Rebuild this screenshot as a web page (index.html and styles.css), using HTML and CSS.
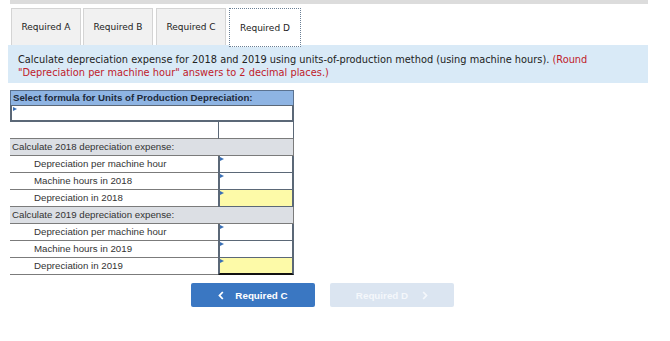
FILE: index.html
```html
<!DOCTYPE html>
<html>
<head>
<meta charset="utf-8">
<link rel="stylesheet" href="styles.css">
</head>
<body>
<div class="page">
  <div class="topbar"></div>
  <div class="tabs">
    <div class="tab">Required A</div>
    <div class="tab">Required B</div>
    <div class="tab">Required C</div>
    <div class="tab active">Required D</div>
  </div>
  <div class="info"><span>Calculate depreciation expense for 2018 and 2019 using units-of-production method (using machine hours).</span> <span class="red">(Round</span><br><span class="red">"Depreciation per machine hour" answers to 2 decimal places.)</span></div>
  <div class="sheet">
    <div class="head">Select formula for Units of Production Depreciation:</div>
    <div class="formula"><span class="mark"></span></div>
    <div class="row blank"><div class="lbl"></div><div class="cell"></div></div>
    <div class="row section"><div class="lbl">Calculate 2018 depreciation expense:</div><div class="cell plain"></div></div>
    <div class="row"><div class="lbl sub">Depreciation per machine hour</div><div class="cell input"><span class="mark"></span></div></div>
    <div class="row"><div class="lbl sub">Machine hours in 2018</div><div class="cell input"><span class="mark"></span></div></div>
    <div class="row"><div class="lbl sub">Depreciation in 2018</div><div class="cell input yellow"><span class="mark"></span></div></div>
    <div class="row section"><div class="lbl">Calculate 2019 depreciation expense:</div><div class="cell plain"></div></div>
    <div class="row"><div class="lbl sub">Depreciation per machine hour</div><div class="cell input"><span class="mark"></span></div></div>
    <div class="row"><div class="lbl sub">Machine hours in 2019</div><div class="cell input"><span class="mark"></span></div></div>
    <div class="row"><div class="lbl sub">Depreciation in 2019</div><div class="cell input yellow last"><span class="mark"></span></div></div>
  </div>
  <div class="nav">
    <div class="btn prev"><svg class="chev" width="6" height="9" viewBox="0 0 6 9"><polyline points="4.8,1 1.5,4.5 4.8,8" fill="none" stroke="#fff" stroke-width="1.8"/></svg>Required C</div>
    <div class="btn next">Required D<svg class="chev" width="6" height="9" viewBox="0 0 6 9"><polyline points="1.2,1 4.5,4.5 1.2,8" fill="none" stroke="#f4f7fb" stroke-width="1.8"/></svg></div>
  </div>
</div>
</body>
</html>
```
FILE: styles.css
```css
html, body { margin: 0; padding: 0; background: #fff; }
.page { width: 670px; height: 341px; position: relative; font-family: "DejaVu Sans", Verdana, sans-serif; }
.topbar { margin-left: 10px; width: 638px; height: 4px; background: #dcdcdc; }
.tabs { display: flex; margin: 4px 0 0 11px; height: 37px; gap: 2px; }
.tab { width: 68px; height: 36px; background: #f1f1f1; border: 1px solid #d4d4d4; border-bottom: none; font-size: 9px; color: #222; display: flex; align-items: center; justify-content: center; }
.tab:nth-child(3) { margin-left: 1px; }
.tab.active { background: #fff; border: 1px dotted #6a7f95; width: 70px; height: 37px; margin-left: 1px; }
.info { margin: 0 22px 0 8px; height: 38px; background: #d9eaf7; font-size: 9.8px; color: #222; padding: 8px 10px 0 10px; box-sizing: border-box; line-height: 13px; }
.red { color: #c0202a; }
.sheet { margin: 7px 0 0 10px; width: 284px; font-family: "Liberation Sans", Arial, sans-serif; font-size: 9.7px; color: #333; }
.head { height: 15px; background: #8eb4e3; border: 1px solid #5b7290; border-bottom: none; color: #1d2a3a; font-weight: bold; line-height: 14px; padding-left: 2px; box-sizing: border-box; }
.formula { height: 17px; border: 2px solid #5b6877; border-top-width: 1px; position: relative; box-sizing: border-box; }
.row { display: flex; height: 17px; }
.lbl { flex: 1; border-bottom: 1px solid #7b7b7b; line-height: 16px; padding-left: 2px; white-space: nowrap; }
.lbl.sub { padding-left: 24px; }
.cell { width: 76px; box-sizing: border-box; position: relative; }
.blank .cell { border-left: 1px solid #5b6877; border-right: 1px solid #5b6877; border-bottom: 1px solid #7b7b7b; }
.section { background: #dcdfe4; }
.section .cell { border-bottom: 1px solid #7b7b7b; border-right: 1px solid #7b7b7b; }
.input { background: #fff; border: 1px solid #5b6877; border-left-width: 2px; border-top: none; border-right-width: 2px; }
.yellow { background: #fdfaa8; }
.last { border-bottom: 2px solid #111; }
.mark { position: absolute; left: 0; top: 1px; width: 0; height: 0; border-top: 2.5px solid transparent; border-bottom: 2.5px solid transparent; border-left: 4px solid #3a6fb5; }
.formula .mark { left: 1px; top: 1px; }
.nav { display: flex; margin: 8px 0 0 191px; gap: 15px; }
.btn { width: 124px; height: 24px; border-radius: 2px; font-family: "Liberation Sans", Arial, sans-serif; font-weight: bold; font-size: 9.8px; display: flex; align-items: center; justify-content: center; color: #fff; }
.prev { background: #3a77c2; }
.next { background: #dbe5f1; color: #f4f7fb; }
.chev { display: block; }
.prev .chev { margin-right: 11px; }
.next .chev { margin-left: 14px; }
```
